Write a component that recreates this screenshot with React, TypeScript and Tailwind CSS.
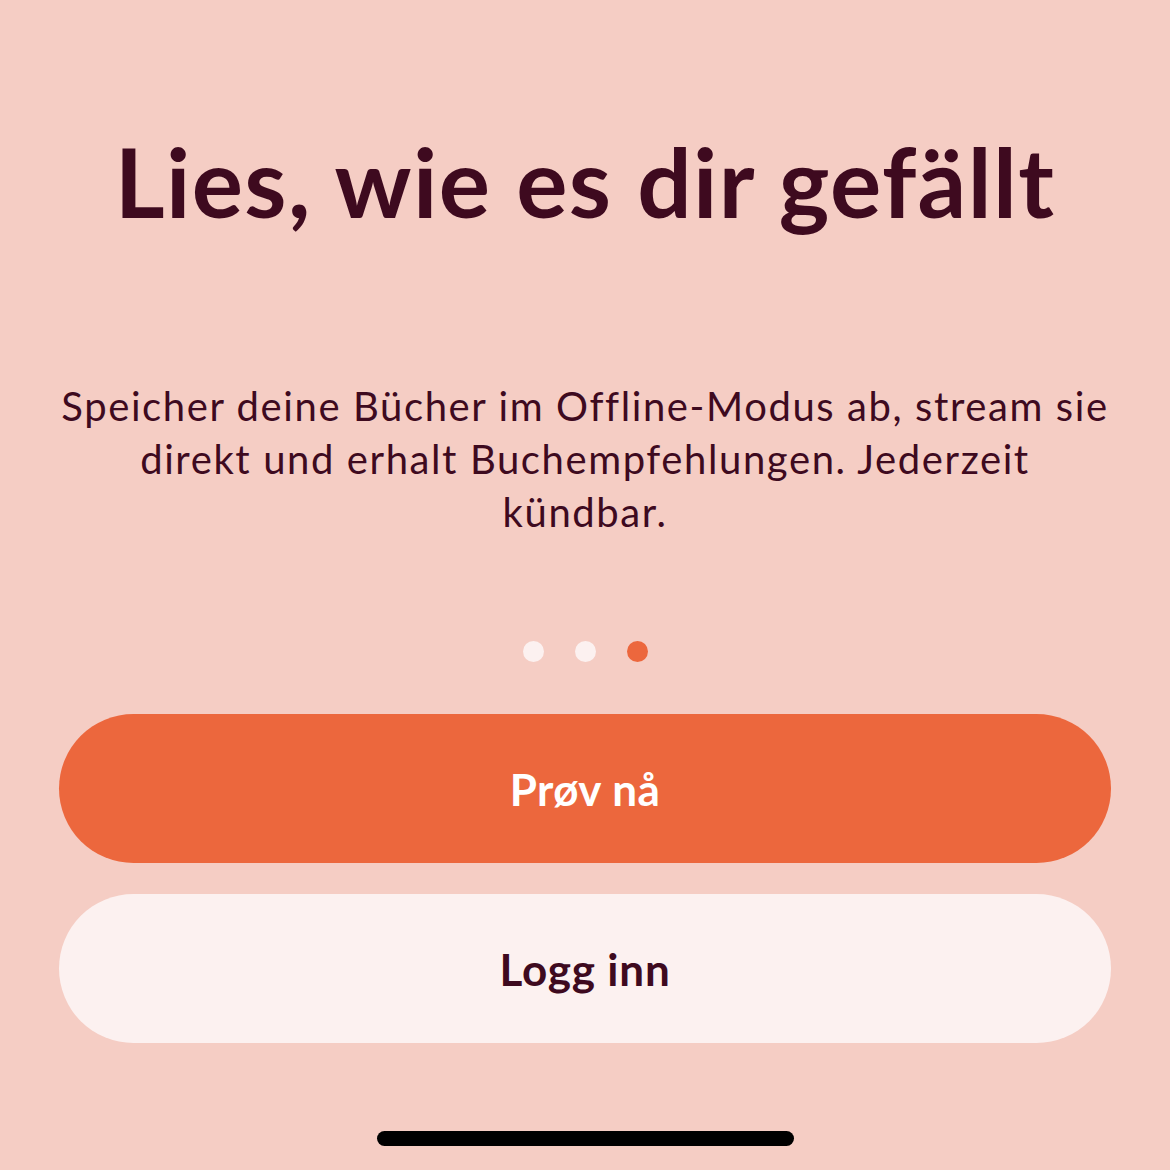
import React from "react";

export default function App() {
  return (
    <div
      className="w-[1170px] h-[1170px] bg-[#f5cdc4] flex flex-col items-center text-[#3e0a1f] overflow-hidden"
      style={{ fontFamily: "Lato, 'Noto Sans', sans-serif" }}
    >
      <h1 className="mt-[126px] text-[96px] leading-[110px] font-bold tracking-[1.4px] text-center whitespace-nowrap">
        Lies, wie es dir gefällt
      </h1>
      <p className="mt-[144px] w-[1120px] text-center text-[40px] leading-[53px] tracking-[1.6px] whitespace-nowrap">
        Speicher deine Bücher im Offline-Modus ab, stream sie
        <br />
        direkt und erhalt Buchempfehlungen. Jederzeit
        <br />
        kündbar.
      </p>
      <div className="mt-[102px] flex gap-[31px]">
        <div className="w-[21px] h-[21px] rounded-full bg-[#fcf1f0]" />
        <div className="w-[21px] h-[21px] rounded-full bg-[#fcf1f0]" />
        <div className="w-[21px] h-[21px] rounded-full bg-[#ec673d]" />
      </div>
      <div className="mt-[52px] w-[1052px] flex flex-col gap-[31px]">
        <button className="h-[149px] rounded-full bg-[#ec673d] text-white text-[44px] font-bold tracking-[0.5px]">
          Prøv nå
        </button>
        <button className="h-[149px] rounded-full bg-[#fcf1f0] text-[#3e0a1f] text-[44px] font-bold tracking-[0.8px]">
          Logg inn
        </button>
      </div>
      <div className="mt-[88px] w-[417px] h-[15px] rounded-full bg-black" />
    </div>
  );
}
